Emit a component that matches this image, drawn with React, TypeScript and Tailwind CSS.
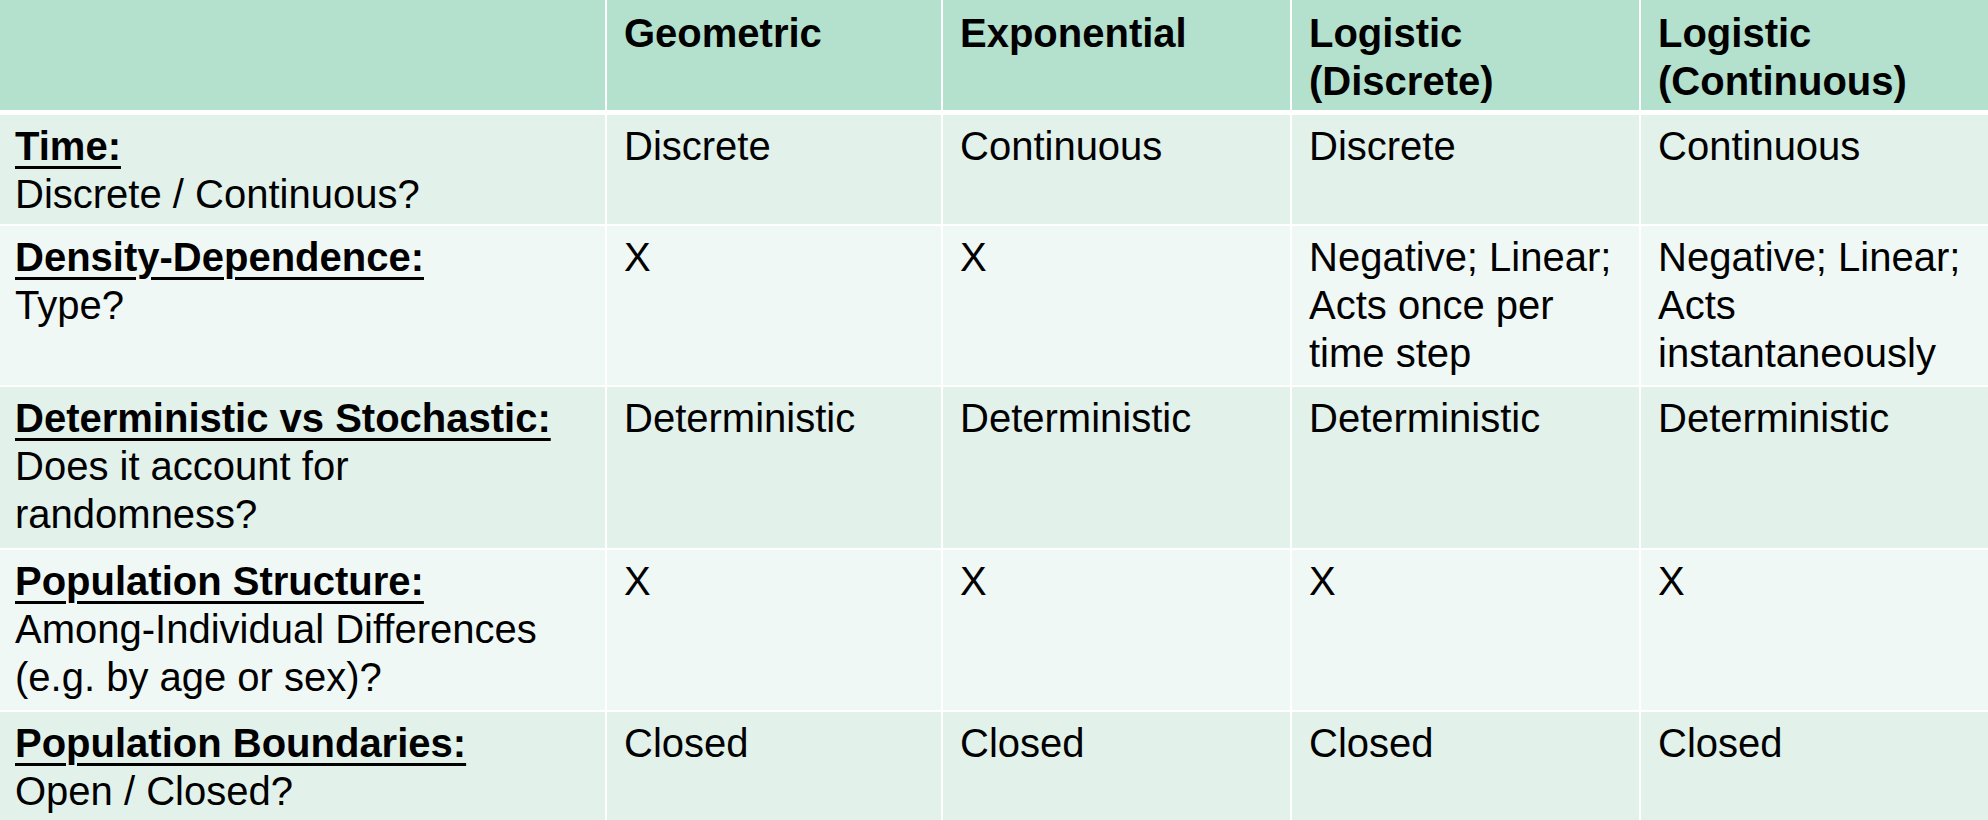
import React from 'react';

type Row = {
  title: string;
  question: React.ReactNode;
  cells: React.ReactNode[];
  height: string;
  shade: string;
};

const headers: React.ReactNode[] = [
  'Geometric',
  'Exponential',
  <>
    Logistic
    <br />
    (Discrete)
  </>,
  <>
    Logistic
    <br />
    (Continuous)
  </>,
];

const rows: Row[] = [
  {
    title: 'Time:',
    question: 'Discrete / Continuous?',
    cells: ['Discrete', 'Continuous', 'Discrete', 'Continuous'],
    height: 'h-[109px]',
    shade: 'bg-[#e2f1ea]',
  },
  {
    title: 'Density-Dependence:',
    question: 'Type?',
    cells: [
      'X',
      'X',
      <>
        Negative; Linear;
        <br />
        Acts once per
        <br />
        time step
      </>,
      <>
        Negative; Linear;
        <br />
        Acts
        <br />
        instantaneously
      </>,
    ],
    height: 'h-[159px]',
    shade: 'bg-[#f0f8f5]',
  },
  {
    title: 'Deterministic vs Stochastic:',
    question: (
      <>
        Does it account for
        <br />
        randomness?
      </>
    ),
    cells: ['Deterministic', 'Deterministic', 'Deterministic', 'Deterministic'],
    height: 'h-[161px]',
    shade: 'bg-[#e2f1ea]',
  },
  {
    title: 'Population Structure:',
    question: (
      <>
        Among-Individual Differences
        <br />
        (e.g. by age or sex)?
      </>
    ),
    cells: ['X', 'X', 'X', 'X'],
    height: 'h-[160px]',
    shade: 'bg-[#f0f8f5]',
  },
  {
    title: 'Population Boundaries:',
    question: 'Open / Closed?',
    cells: ['Closed', 'Closed', 'Closed', 'Closed'],
    height: 'h-[108px]',
    shade: 'bg-[#e2f1ea]',
  },
];

const cols = 'grid grid-cols-[605px_334px_347px_347px_347px] gap-x-[2px]';

const App = () => {
  return (
    <div className="flex h-[820px] w-[1988px] flex-col overflow-hidden bg-white font-['Liberation_Sans',Arial,sans-serif] text-[40px] leading-[48px] text-black">
      <div className={`${cols} mb-[5px] h-[110px]`}>
        <div className="bg-[#b4e0ce]" />
        {headers.map((h, i) => (
          <div key={i} className="whitespace-nowrap bg-[#b4e0ce] px-[17px] pt-[9px] font-bold">
            {h}
          </div>
        ))}
      </div>

      <div className="flex flex-col gap-y-[2px]">
        {rows.map((row) => (
          <div key={row.title} className={`${cols} ${row.height}`}>
            <div className={`${row.shade} whitespace-nowrap px-[15px] pt-[7px]`}>
              <div className="font-bold underline decoration-[3px] underline-offset-[6px]">{row.title}</div>
              <div>{row.question}</div>
            </div>
            {row.cells.map((c, i) => (
              <div key={i} className={`${row.shade} whitespace-nowrap px-[17px] pt-[7px]`}>
                {c}
              </div>
            ))}
          </div>
        ))}
      </div>
    </div>
  );
};

export default App;
